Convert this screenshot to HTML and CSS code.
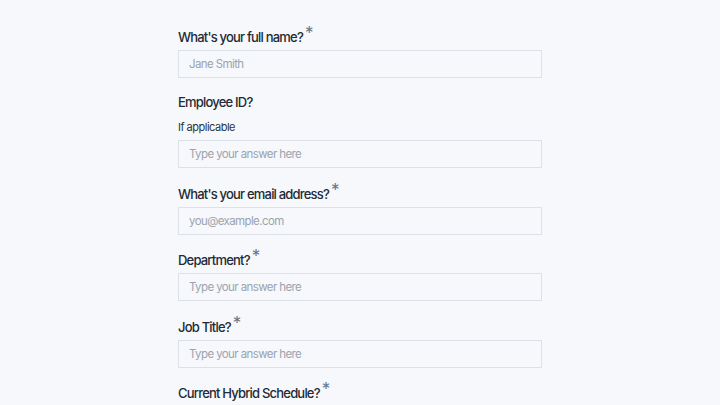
FILE: index.html
```html
<!DOCTYPE html>
<html>
<head>
<meta charset="utf-8">
<link rel="stylesheet" href="styles.css">
</head>
<body>
<form class="form">
  <div class="field">
    <label class="label">What's your full name?<span class="req">*</span></label>
    <input class="input" type="text" placeholder="Jane Smith">
  </div>
  <div class="field">
    <label class="label">Employee ID?</label>
    <div class="help">If applicable</div>
    <input class="input" type="text" placeholder="Type your answer here">
  </div>
  <div class="field">
    <label class="label">What's your email address?<span class="req">*</span></label>
    <input class="input" type="text" placeholder="you@example.com">
  </div>
  <div class="field">
    <label class="label">Department?<span class="req">*</span></label>
    <input class="input" type="text" placeholder="Type your answer here">
  </div>
  <div class="field">
    <label class="label">Job Title?<span class="req">*</span></label>
    <input class="input" type="text" placeholder="Type your answer here">
  </div>
  <div class="field">
    <label class="label">Current Hybrid Schedule?<span class="req">*</span></label>
  </div>
</form>
</body>
</html>
```
FILE: styles.css
```css
html, body {
  margin: 0;
  padding: 0;
  background: #f6f8fb;
  font-family: Inter, "Noto Sans", sans-serif;
  overflow: hidden;
  height: 405px;
}
.form {
  width: 364px;
  margin: 0 0 0 178px;
  padding-top: 27px;
  display: flex;
  flex-direction: column;
  gap: 15.4px;
}
.field {
  display: flex;
  flex-direction: column;
}
.label {
  font-size: 13px;
  line-height: 18px;
  font-weight: 500;
  letter-spacing: -0.8px;
  color: #222a36;
  margin-bottom: 4px;
}
.req {
  color: #64748b;
  font-size: 17px;
  font-weight: 400;
  position: relative;
  top: -3px;
  margin-left: 2px;
}
.help {
  font-size: 11px;
  line-height: 14px;
  letter-spacing: -0.5px;
  color: #2d3440;
  margin-top: 5px;
  margin-bottom: 6px;
}
.input {
  box-sizing: border-box;
  width: 364px;
  height: 28px;
  border: 1px solid #dde2e8;
  background: #f6f8fb;
  padding: 0 10px;
  font-family: inherit;
  font-size: 11.5px;
  letter-spacing: -0.6px;
  color: #1f2937;
  border-radius: 0;
  outline: none;
}
.input::placeholder {
  color: #9ca3af;
}
```
